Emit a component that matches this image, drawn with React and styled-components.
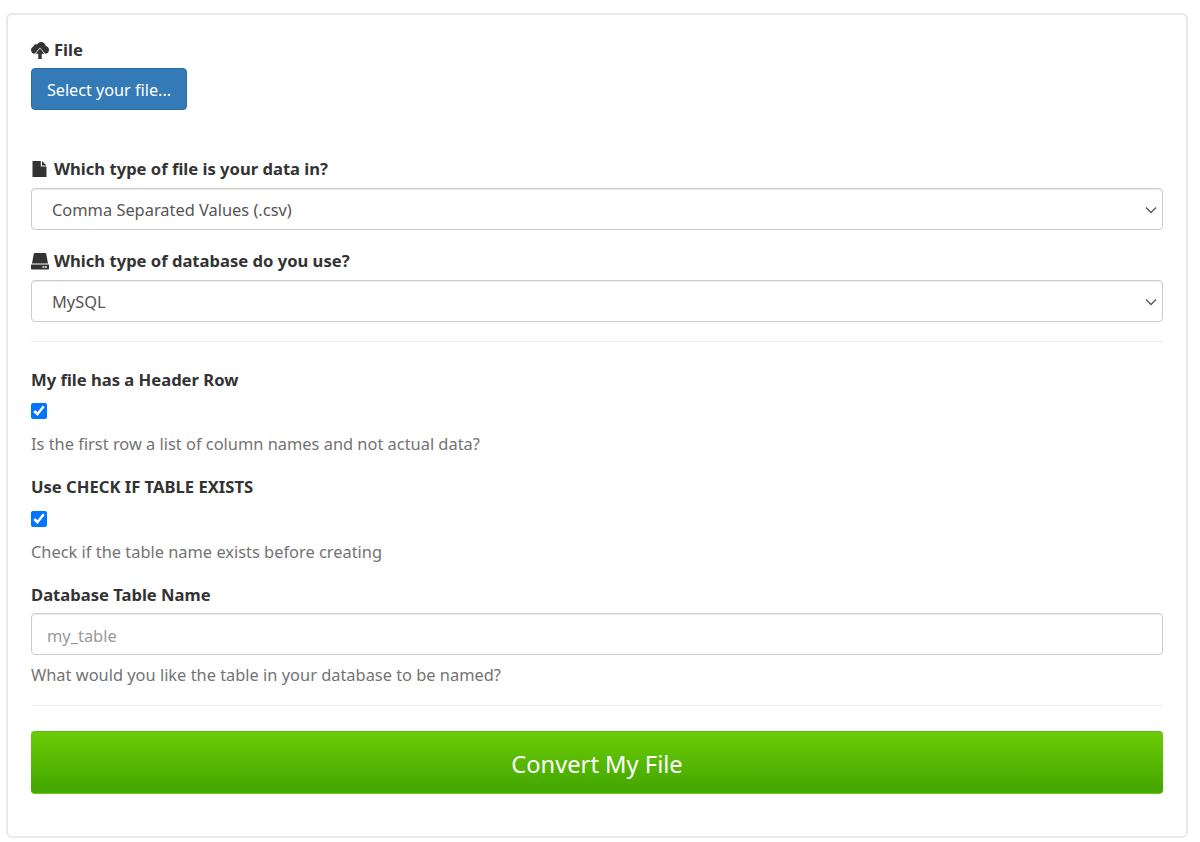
import React from "react";
import styled, { createGlobalStyle } from "styled-components";

const GlobalStyle = createGlobalStyle`
  html, body {
    margin: 0;
    padding: 0;
    background: #fff;
  }
  body {
    font-family: "Noto Sans", "Open Sans", Arial, sans-serif;
    font-size: 16.4px;
    color: #333;
  }
  * {
    box-sizing: border-box;
  }
`;

const Page = styled.div`
  padding: 13px 12px 5px 6px;
`;

const Card = styled.form`
  border: 2px solid #e9e9e9;
  border-radius: 6px;
  background: #fff;
  padding: 24px 23px 42px;
`;

const Group = styled.div`
  margin-bottom: ${(p) => p.$gap ?? 20}px;
`;

const Label = styled.label`
  display: flex;
  align-items: center;
  gap: 5px;
  height: 22px;
  margin-bottom: ${(p) => p.$gap ?? 8}px;
  font-size: 16.6px;
  font-weight: 700;
  color: #333;
`;

const IconLabel = styled(Label)`
  padding-bottom: 2px;
`;

const Icon = styled.svg`
  width: 18px;
  height: 18px;
  margin-top: 2px;
  flex: none;
  fill: #333;
`;

const FileButton = styled.button`
  display: block;
  width: 156px;
  height: 42px;
  padding: 2px 0 0;
  border: 1px solid #2e6da4;
  border-radius: 4px;
  background: #337ab7;
  color: #fff;
  font: inherit;
  font-size: 16.2px;
`;

const SelectWrap = styled.div`
  position: relative;
`;

const Select = styled.select`
  display: block;
  width: 100%;
  height: 42px;
  padding: 0 30px 0 20px;
  border: 1px solid #ccc;
  border-radius: 4px;
  background: #fff;
  box-shadow: inset 0 1px 1px rgba(0, 0, 0, 0.075);
  color: #555;
  font: inherit;
  appearance: none;
`;

const Chevron = styled.svg`
  position: absolute;
  top: 18px;
  right: 6px;
  width: 12px;
  height: 8px;
  fill: none;
  stroke: #555;
  stroke-width: 1.3;
  pointer-events: none;
`;

const Divider = styled.hr`
  height: 1px;
  margin: ${(p) => p.$top}px 0 ${(p) => p.$bottom}px;
  border: 0;
  background: #eee;
`;

const Check = styled.input`
  display: block;
  width: 16px;
  height: 16px;
  margin: 0;
  accent-color: #0075ff;
`;

const Help = styled.p`
  margin: ${(p) => p.$top}px 0 0;
  height: 22px;
  line-height: 22px;
  color: #737373;
`;

const TextInput = styled.input`
  display: block;
  width: 100%;
  height: 42px;
  padding: 3px 15px 0;
  border: 1px solid #ccc;
  border-radius: 4px;
  box-shadow: inset 0 1px 1px rgba(0, 0, 0, 0.075);
  color: #555;
  font: inherit;

  &::placeholder {
    color: #999;
    opacity: 1;
  }
`;

const ConvertButton = styled.button`
  display: block;
  width: 100%;
  height: 63px;
  padding: 3px 0 0;
  border: 0;
  border-top: 1px solid #5cb21b;
  border-bottom: 1px solid #66c808;
  border-radius: 4px;
  background: linear-gradient(to bottom, #6ccc08, #46a900 88%);
  color: #fff;
  font: inherit;
  font-size: 23.7px;
`;

const Chev = () => (
  <Chevron viewBox="0 0 12 8">
    <path d="M1 1.5l5 5 5-5" />
  </Chevron>
);

export default function App() {
  return (
    <Page>
      <GlobalStyle />
      <Card onSubmit={(e) => e.preventDefault()}>
        <Group $gap={48}>
          <IconLabel $gap={7}>
            <Icon viewBox="0 0 18 18">
              <path d="M10 1c2.500 0 4.500 1.800 4.800 4.100 1.800.3 3.200 1.900 3.200 3.800 0 2.200-1.700 3.900-3.800 3.900H3.800C1.700 12.800 0 11.100 0 9c0-1.700 1.100-3.100 2.600-3.600.2-1.200 1.200-2.100 2.400-2.100.4 0 .8.100 1.100.3C6.900 2 8.300 1 10 1z" />
              <path stroke="#fff" strokeWidth="1.400" paintOrder="stroke" d="M9 7.600l4.400 5.100h-2.700V18H7.300v-5.300H4.600z" />
            </Icon>
            File
          </IconLabel>
          <FileButton type="button">Select your file...</FileButton>
        </Group>

        <Group>
          <IconLabel>
            <Icon viewBox="0 0 18 18">
              <path d="M1.500 1h8.300v5.500h5.700V17h-14z" />
              <path d="M11 1l4.500 4.400H11z" />
            </Icon>
            Which type of file is your data in?
          </IconLabel>
          <SelectWrap>
            <Select defaultValue="csv">
              <option value="csv">Comma Separated Values (.csv)</option>
            </Select>
            <Chev />
          </SelectWrap>
        </Group>

        <Group $gap={0}>
          <IconLabel>
            <Icon viewBox="0 0 18 18">
              <path d="M3.700 1h10.600c.5 0 .8.300.9.700L17 11.500H1L2.800 1.700c.1-.4.400-.7.900-.7z" />
              <path fillRule="evenodd" d="M1 12.500h16c.6 0 1 .4 1 1v3c0 .6-.4 1-1 1H1c-.6 0-1-.4-1-1v-3c0-.6.4-1 1-1zM11.500 14.200v1.600h1.800v-1.600zm2.500 0v1.600h1.800v-1.600z" />
            </Icon>
            Which type of database do you use?
          </IconLabel>
          <SelectWrap>
            <Select defaultValue="mysql">
              <option value="mysql">MySQL</option>
            </Select>
            <Chev />
          </SelectWrap>
        </Group>

        <Divider $top={19} $bottom={26} />

        <Group $gap={20}>
          <Label $gap={13}>My file has a Header Row</Label>
          <Check type="checkbox" defaultChecked />
          <Help $top={14}>Is the first row a list of column names and not actual data?</Help>
        </Group>

        <Group $gap={20}>
          <Label $gap={14}>Use CHECK IF TABLE EXISTS</Label>
          <Check type="checkbox" defaultChecked />
          <Help $top={14}>Check if the table name exists before creating</Help>
        </Group>

        <Group $gap={0}>
          <Label $gap={8}>Database Table Name</Label>
          <TextInput placeholder="my_table" />
          <Help $top={9}>What would you like the table in your database to be named?</Help>
        </Group>

        <Divider $top={19} $bottom={25} />

        <ConvertButton type="submit">Convert My File</ConvertButton>
      </Card>
    </Page>
  );
}
